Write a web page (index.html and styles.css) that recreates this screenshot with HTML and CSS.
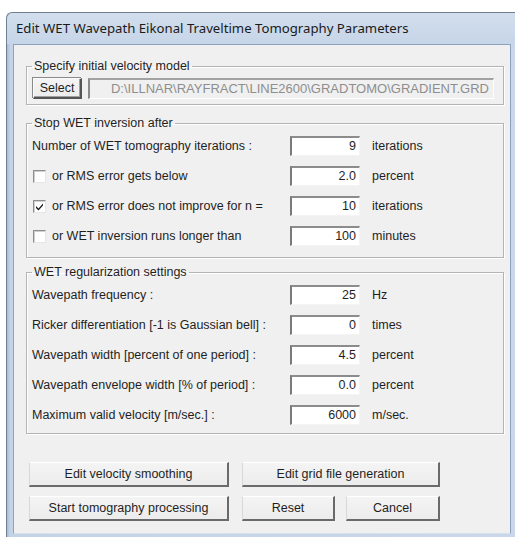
FILE: index.html
```html
<!DOCTYPE html>
<html lang="en">
<head>
<meta charset="utf-8">
<title>Edit WET Wavepath Eikonal Traveltime Tomography Parameters</title>
<link rel="stylesheet" href="styles.css">
</head>
<body>
<div class="window">
  <div class="titlebar">Edit WET Wavepath Eikonal Traveltime Tomography Parameters</div>
  <div class="client">
    <fieldset class="group group-model">
      <legend>Specify initial velocity model</legend>
      <div class="model-row">
        <button class="btn btn-select" type="button">Select</button>
        <div class="path">D:\ILLNAR\RAYFRACT\LINE2600\GRADTOMO\GRADIENT.GRD</div>
      </div>
    </fieldset>

    <fieldset class="group group-stop">
      <legend>Stop WET inversion after</legend>
      <div class="params">
        <div class="plabel">Number of WET tomography iterations :</div>
        <div class="field">9</div>
        <div class="unit">iterations</div>

        <div class="plabel check-label"><span class="check"></span>or RMS error gets below</div>
        <div class="field">2.0</div>
        <div class="unit">percent</div>

        <div class="plabel check-label"><span class="check checked"><svg viewBox="0 0 13 13" width="13" height="13"><path d="M3 6 L5.5 8.5 L10 3.5 L10 5.5 L5.5 10.5 L3 8 Z" fill="#1a1a1a"/></svg></span>or RMS error does not improve for n =</div>
        <div class="field">10</div>
        <div class="unit">iterations</div>

        <div class="plabel check-label"><span class="check"></span>or WET inversion runs longer than</div>
        <div class="field">100</div>
        <div class="unit">minutes</div>
      </div>
    </fieldset>

    <fieldset class="group group-reg">
      <legend>WET regularization settings</legend>
      <div class="params">
        <div class="plabel">Wavepath frequency :</div>
        <div class="field">25</div>
        <div class="unit">Hz</div>

        <div class="plabel">Ricker differentiation [-1 is Gaussian bell] :</div>
        <div class="field">0</div>
        <div class="unit">times</div>

        <div class="plabel">Wavepath width [percent of one period] :</div>
        <div class="field">4.5</div>
        <div class="unit">percent</div>

        <div class="plabel">Wavepath envelope width [% of period] :</div>
        <div class="field">0.0</div>
        <div class="unit">percent</div>

        <div class="plabel">Maximum valid velocity [m/sec.] :</div>
        <div class="field">6000</div>
        <div class="unit">m/sec.</div>
      </div>
    </fieldset>

    <div class="actions">
      <div class="action-row">
        <button class="btn btn-wide" type="button">Edit velocity smoothing</button>
        <button class="btn btn-grid" type="button">Edit grid file generation</button>
      </div>
      <div class="action-row">
        <button class="btn btn-wide" type="button">Start tomography processing</button>
        <button class="btn btn-reset" type="button">Reset</button>
        <button class="btn btn-cancel" type="button">Cancel</button>
      </div>
    </div>
  </div>
</div>
</body>
</html>
```

FILE: styles.css
```css
* { box-sizing: border-box; }

html, body {
  margin: 0;
  padding: 0;
  background: #ffffff;
}

body {
  width: 515px;
  height: 537px;
  overflow: hidden;
  font-family: "Liberation Sans", Arial, sans-serif;
  font-size: 12.5px;
  color: #1f1f1f;
}

/* Aero-basic style frame */
.window {
  margin: 12px 0 0 6px;
  width: 509px;
  height: 525px;
  background: linear-gradient(to right, #a9bcd6 0px, #c4d3e6 3px, #c9d7e8 100%);
  border: 1px solid #6f7f94;
  border-bottom: none;
  border-right: none;
  border-radius: 6px 0 0 0;
  display: flex;
  flex-direction: column;
}

.titlebar {
  height: 31px;
  flex: none;
  padding: 5px 0 0 9px;
  font-family: "Noto Sans", "Open Sans", sans-serif;
  font-size: 13.2px;
  line-height: 20px;
  color: #1a1a1a;
  white-space: nowrap;
  background: linear-gradient(to bottom, #d2deed 0%, #c6d5e8 100%);
  border-radius: 6px 0 0 0;
}

.client {
  margin: 0 4px 0 6px;
  height: 490px;
  background: #f0f0f0;
  border: 1px solid #8ea2bd;
  border-bottom-color: #d6e1ee;
  padding: 14px 0 0 12px;
}

/* group boxes */
.group {
  margin: 0;
  width: 478px;
  border: 1px solid #b4b4b4;
  box-shadow: inset 1px 1px 0 #ffffff, 1px 1px 0 #ffffff;
  padding: 0 5px;
  min-width: 0;
}

.group legend {
  padding: 0 2px;
  line-height: 14px;
  color: #1f1f1f;
}

.group-model { padding-top: 5px; padding-bottom: 5px; }
.group-stop  { margin-top: 11px; padding-top: 6px; padding-bottom: 11px; }
.group-reg   { margin-top: 7px; padding-top: 6px; padding-bottom: 8px; }

.model-row {
  display: flex;
  align-items: center;
  gap: 6px;
  padding-left: 1px;
}

.path {
  width: 406px;
  height: 21px;
  line-height: 17px;
  font-size: 13px;
  text-align: right;
  padding-right: 4px;
  color: #8e8e8e;
  white-space: nowrap;
  overflow: hidden;
  border-style: solid;
  border-width: 2px 1px 1px 2px;
  border-color: #a2a2a2 #ffffff #ffffff #8a8a8a;
  background: #f0f0f0;
}

/* parameter rows: label / value box / unit */
.params {
  display: grid;
  grid-template-columns: 258px 70px auto;
  grid-auto-rows: 20px;
  row-gap: 10px;
  align-items: center;
}

.plabel {
  white-space: nowrap;
  display: flex;
  align-items: center;
}

.check-label { padding-left: 1px; }

.check {
  width: 13px;
  height: 13px;
  margin-right: 6px;
  background: #ffffff;
  border-style: solid;
  border-width: 1px;
  border-color: #8e8e8e #e6e6e6 #e6e6e6 #8e8e8e;
  box-shadow: inset 1px 1px 0 #d0d0d0;
  flex: none;
}

.check svg {
  display: block;
  margin: -1px 0 0 -1px;
}

.field {
  height: 20px;
  background: #ffffff;
  border-style: solid;
  border-width: 2px 1px 1px 2px;
  border-color: #8c8c8c #f4f4f4 #f4f4f4 #7a7a7a;
  text-align: right;
  padding-right: 3px;
  line-height: 16px;
  color: #1f1f1f;
}

.unit {
  padding-left: 12px;
  white-space: nowrap;
}

/* push buttons */
.btn {
  font-family: "Liberation Sans", Arial, sans-serif;
  font-size: 12.5px;
  color: #1f1f1f;
  background: linear-gradient(to bottom, #f4f4f4 0%, #ececec 100%);
  border-style: solid;
  border-width: 1px 2px 2px 1px;
  border-color: #ffffff #6a6a6a #6a6a6a #d8d8d8;
  padding: 0;
  margin: 0;
}

.btn-select {
  width: 49px;
  height: 21px;
  border-color: #fafafa #555555 #555555 #fafafa;
  box-shadow: -1px -1px 0 #8a8a8a, inset -1px -1px 0 #a0a0a0;
}

.actions {
  margin-top: 28px;
  padding-left: 3px;
  display: flex;
  flex-direction: column;
  gap: 9px;
}

.action-row {
  display: flex;
  gap: 13px;
}

.action-row .btn { height: 25px; }
.btn-wide   { width: 200px; }
.btn-grid   { width: 198px; }
.btn-reset  { width: 93px; }
.btn-cancel { width: 94px; margin-left: -2px; }
```
